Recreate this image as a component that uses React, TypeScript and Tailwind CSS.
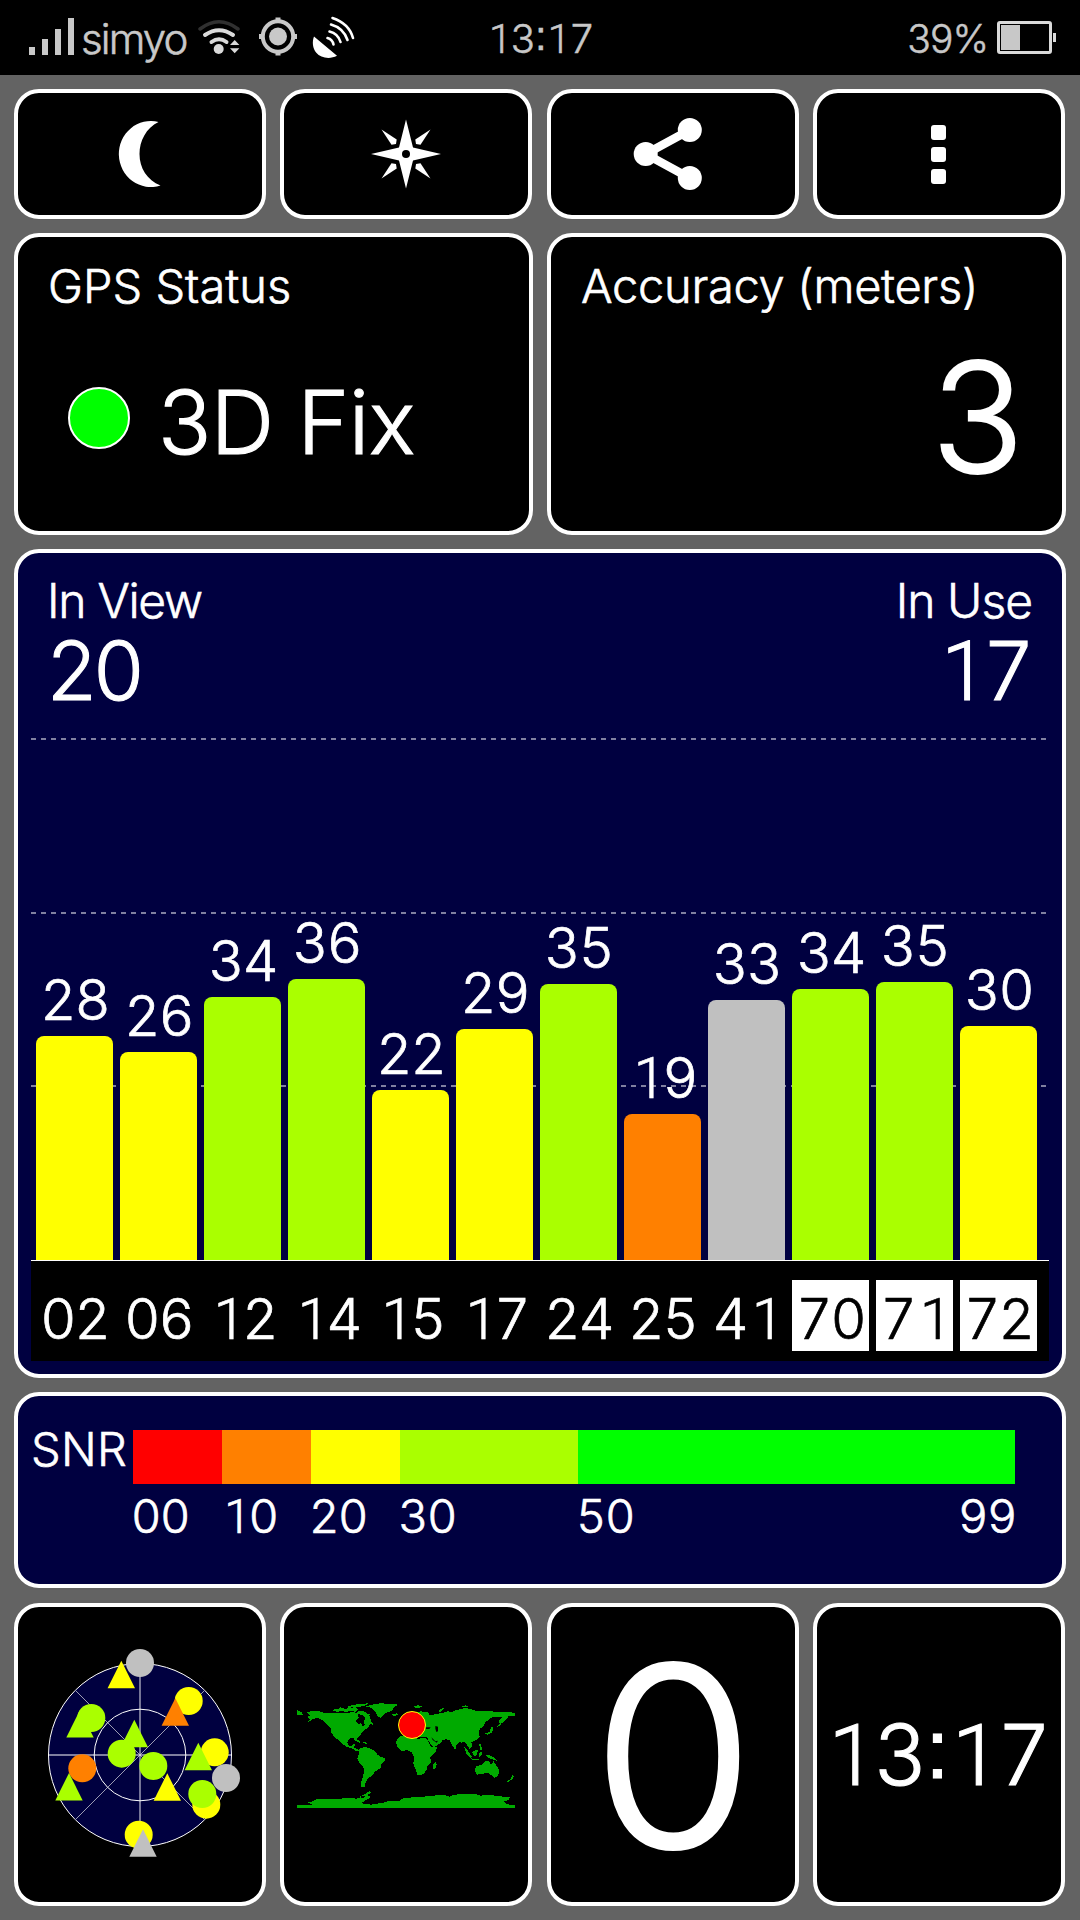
import type { ReactNode } from 'react';
import clsx from 'clsx';

type Satellite = { id: string; snr: number; height: number; color: string; glonass?: boolean };

const YELLOW = 'bg-[#ffff00]';
const LIME = 'bg-[#aaff00]';
const ORANGE = 'bg-[#ff8000]';
const GRAY = 'bg-[#c0c0c0]';

const satellites: Satellite[] = [
  { id: '02', snr: 28, height: 224, color: YELLOW },
  { id: '06', snr: 26, height: 208, color: YELLOW },
  { id: '12', snr: 34, height: 263, color: LIME },
  { id: '14', snr: 36, height: 281, color: LIME },
  { id: '15', snr: 22, height: 170, color: YELLOW },
  { id: '17', snr: 29, height: 231, color: YELLOW },
  { id: '24', snr: 35, height: 276, color: LIME },
  { id: '25', snr: 19, height: 146, color: ORANGE },
  { id: '41', snr: 33, height: 260, color: GRAY },
  { id: '70', snr: 34, height: 271, color: LIME, glonass: true },
  { id: '71', snr: 35, height: 278, color: LIME, glonass: true },
  { id: '72', snr: 30, height: 234, color: YELLOW, glonass: true },
];

// Offsets from the centre of the sky plot
const skyCircles = [
  { x: 0, y: -92, fill: '#c0c0c0' },
  { x: 48.7, y: -54, fill: '#ffff00' },
  { x: -48.7, y: -37, fill: '#aaff00' },
  { x: 74.7, y: -2.7, fill: '#ffff00' },
  { x: 86, y: 23, fill: '#c0c0c0' },
  { x: 66.3, y: 49.7, fill: '#ffff00' },
  { x: 62.3, y: 39, fill: '#aaff00' },
  { x: 13.3, y: 11, fill: '#aaff00' },
  { x: -18.3, y: -1.3, fill: '#aaff00' },
  { x: -57.7, y: 13.3, fill: '#ff8000' },
  { x: -1.3, y: 79.7, fill: '#ffff00' },
];

const skyTriangles = [
  { x: -18.7, y: -94.3, fill: '#ffff00' },
  { x: 35.3, y: -56.7, fill: '#ff8000' },
  { x: -60, y: -45, fill: '#aaff00' },
  { x: -5.7, y: -35.3, fill: '#aaff00' },
  { x: 58.3, y: -12.3, fill: '#aaff00' },
  { x: -71, y: 18, fill: '#aaff00' },
  { x: 27.3, y: 18.3, fill: '#ffff00' },
  { x: 3, y: 74.3, fill: '#c0c0c0' },
];

const land = [
  // North America
  '22,60 36,68 38,74 22,74',
  '50,68 62,64 88,64 100,68 128,68 160,70 190,66 204,70 206,84 196,92 204,102 214,100 218,110 224,106 222,92 228,82 238,78 244,94 252,106 240,102 236,112 224,120 214,128 210,138 200,146 204,158 196,150 190,144 178,146 172,156 174,166 184,168 190,162 196,162 192,172 202,178 212,182 200,184 188,176 170,170 156,162 146,150 134,142 124,128 122,114 112,104 98,90 84,84 72,86 54,96 60,88 52,82 60,76',
  '130,62 134,56 144,58 150,52 160,54 168,58 178,50 186,54 194,50 204,58 198,66 180,62 168,68 156,62 144,66',
  '200,66 210,62 222,64 230,70 242,74 234,78 238,84 226,86 220,76 206,72',
  '172,50 186,46 206,42 236,40 226,46 210,50 190,52',
  '190,148 204,150 214,156 208,158 196,152',
  '218,156 232,158 230,161 218,160',
  // Greenland and Iceland
  '226,50 246,44 264,42 270,40 320,42 322,46 312,52 306,62 290,68 278,76 272,84 264,80 256,66 246,54',
  '304,72 322,70 324,75 310,78',
  // South America
  '208,176 226,170 240,176 256,184 262,194 272,200 284,204 284,212 274,222 272,234 256,244 246,256 236,264 228,274 224,284 226,291 212,290 214,274 220,256 222,238 218,228 208,218 202,206 206,192',
  // Africa
  '334,138 348,136 366,134 370,142 384,146 406,144 414,152 424,172 442,170 436,186 420,202 424,218 412,228 410,240 402,250 394,254 382,255 378,242 370,222 372,202 364,186 350,180 334,184 322,172 318,154 326,142',
  '430,222 438,216 440,222 436,236 428,238',
  // Europe and Asia
  '336,132 330,122 334,114 350,108 360,90 372,72 390,64 412,66 420,76 440,72 460,68 474,64 486,66 492,62 510,58 526,54 545,58 560,64 600,64 640,66 675,68 675,78 656,78 648,90 630,104 626,92 636,82 620,80 600,84 594,92 586,96 582,108 570,116 566,128 569,140 556,152 544,156 548,168 538,176 528,160 522,154 516,158 508,156 498,166 496,180 486,166 480,152 468,148 458,150 452,160 430,172 424,164 414,150 412,142 400,140 388,142 370,132 352,134',
  '372,50 384,46 396,49 388,54 376,53',
  '444,64 452,56 466,54 456,60 450,66',
  '512,48 528,46 538,51 522,52',
  // Japan
  '606,110 610,112 606,128 594,134 580,132 600,126 602,114',
  '640,84 646,86 630,106 622,110 634,98',
  // South-East Asia
  '522,170 530,178 546,200 542,206 530,192',
  '542,205 566,208 564,211 546,210',
  '546,186 562,178 564,184 558,198 550,196',
  '566,160 572,162 578,180 572,182',
  '568,188 578,186 574,198 568,200',
  '586,194 600,196 612,202 622,213 606,208 596,204',
  // Australia and New Zealand
  '558,230 574,224 586,214 598,214 600,222 606,222 610,212 618,226 628,240 624,258 612,264 604,256 592,248 576,252 560,254 554,240',
  '666,256 672,258 668,266 654,277 652,274 662,266',
  // Antarctica
  '21,346 70,346 64,342 52,338 68,334 78,328 120,326 150,327 170,323 200,326 210,322 222,324 226,318 210,320 238,304 244,306 232,316 242,318 236,326 222,334 214,340 244,344 280,338 300,332 330,332 340,324 400,320 440,316 460,314 480,320 490,314 540,312 560,313 570,317 600,314 620,318 660,322 656,330 640,334 648,342 675,346 675,354 21,354',
];

function Card({ className, children }: { className?: string; children: ReactNode }) {
  return <div className={clsx('rounded-[25px] border-4 border-white', className)}>{children}</div>;
}

// Roboto has the narrow 1, the other figures are Inter
function One({ className = 'ml-[0.09em] mr-[-0.02em]' }: { className?: string }) {
  return <span className={clsx("font-['Roboto',sans-serif] text-[1.02em] leading-[0]", className)}>1</span>;
}

function Num({ value }: { value: string | number }) {
  return (
    <span>
      {String(value).split('').map((digit, i) => (digit === '1' ? <One key={i} /> : digit))}
    </span>
  );
}

function Time({ colonClass }: { colonClass: string }) {
  return (
    <>
      <One className="mr-[-0.01em]" />3
      <span className={clsx("font-['Liberation_Sans',sans-serif] leading-[0]", colonClass)}>:</span>
      <One className="ml-[0.06em] mr-[-0.01em]" />7
    </>
  );
}

function StatusBar() {
  return (
    <header className="flex h-[75px] items-start bg-black text-[#c8c8c8]">
      <div className="mt-[18px] ml-[29px] flex h-[37px] items-end gap-[7px]">
        <div className="h-2 w-1.5 bg-[#c8c8c8]" />
        <div className="h-4 w-1.5 bg-[#c8c8c8]" />
        <div className="h-[26px] w-1.5 bg-[#c8c8c8]" />
        <div className="h-[37px] w-1.5 bg-[#c8c8c8]" />
      </div>
      <span className="mt-[18px] ml-[7px] w-[115px] text-[42px] leading-none tracking-[-1.9px]">simyo</span>

      <svg className="mt-4" width="48" height="42" viewBox="196 16 48 42" fill="none" strokeLinecap="round">
        <path d="M200 29Q219 14.500 238 29" stroke="#303030" strokeWidth="3.500" />
        <path d="M205 35Q219 25.500 233 35" stroke="#dadada" strokeWidth="4" />
        <path d="M211.500 42Q219 36.500 226.500 42" stroke="#dadada" strokeWidth="4" />
        <circle cx="218.700" cy="49" r="5" fill="#dadada" />
        <path d="M230 45l4.700-5 4.700 5zM230 48.300h9.400l-4.700 5z" fill="#dadada" />
      </svg>

      <svg className="mt-4 ml-[14px]" width="40" height="42" viewBox="258 16 40 42">
        <circle cx="278" cy="36.500" r="15.200" fill="none" stroke="#c8c8c8" strokeWidth="4" />
        <circle cx="278" cy="36.500" r="9" fill="#c8c8c8" />
        <path d="M275.500 17.500h5v4h-5zM275.500 51.500h5v4h-5zM259 34h4v5h-4zM293 34h4v5h-4z" fill="#c8c8c8" />
      </svg>

      <svg className="mt-[14px] ml-3" width="48" height="46" viewBox="310 14 48 46" fill="none" stroke="#fff" strokeLinecap="round">
        <path d="M314 36.500L337 55.800C329.500 59.700 320.500 57.800 316.300 52.800C312.500 48.300 312 41.500 314 36.500Z" fill="#fff" stroke="none" />
        <path d="M332.500 18Q349 23.500 353 38" strokeWidth="2.600" />
        <path d="M331 24.500Q343.500 28 347.500 40" strokeWidth="2.600" />
        <path d="M329.500 31.500Q338 33.500 340.500 42" strokeWidth="2.600" />
        <path d="M327.500 38Q332.500 39.500 333.500 44.500" strokeWidth="2.600" />
      </svg>

      <span className="mt-[19px] ml-[131px] w-[150px] text-[40px] leading-none tracking-[-1px] tabular-nums"><Time colonClass="align-[3px]" /></span>

      <div className="mt-[19px] mr-6 ml-auto flex items-start">
        <span className="text-[39px] leading-none tracking-[-1px]">39%</span>
        <svg className="mt-px ml-2" width="60" height="36" viewBox="996 20 60 36">
          <rect x="998.500" y="22.500" width="52" height="30" rx="1.500" fill="none" stroke="#dadada" strokeWidth="3" />
          <rect x="1001" y="25" width="19" height="25" fill="#c8c8c8" />
          <rect x="1053" y="33" width="3" height="9" fill="#dadada" />
        </svg>
      </div>
    </header>
  );
}

function Toolbar() {
  return (
    <div className="mr-px flex justify-between">
      <Card className="flex h-[130px] w-[252px] items-center justify-center bg-black">
        <svg width="46" height="68" viewBox="117 120 46 68" fill="#fff">
          <path d="M158.500 122A32 33 0 1 0 160.500 185.500C147 180 139.500 168 139.500 154C139.500 141 146 128 158.500 122Z" />
        </svg>
      </Card>
      <Card className="flex h-[130px] w-[252px] items-center justify-center bg-black">
        <svg width="70" height="70" viewBox="-35 -35 70 70" fill="#fff">
          <path d="M0-34.500L7-6.500L35 0L7 6.500L0 34.500L-7 6.500L-35 0L-7-6.500Z" />
          <circle r="4" fill="#000" />
          <path d="M-24.500-24.500L-9.300-14.500L-10-10L-14.500-9.300Z" />
          <path d="M24.500-24.500L9.300-14.500L10-10L14.500-9.300Z" />
          <path d="M-24.500 24.500L-9.300 14.500L-10 10L-14.500 9.300Z" />
          <path d="M24.500 24.500L9.300 14.500L10 10L14.500 9.300Z" />
        </svg>
      </Card>
      <Card className="flex h-[130px] w-[252px] items-center justify-center bg-black">
        <svg width="80" height="76" viewBox="633 116 80 76" fill="#fff">
          <path d="M689.800 130L645.700 154L689.800 178" fill="none" stroke="#fff" strokeWidth="8.500" />
          <circle cx="645.700" cy="154" r="12" />
          <circle cx="689.800" cy="130" r="12" />
          <circle cx="689.800" cy="178" r="12" />
        </svg>
      </Card>
      <Card className="flex h-[130px] w-[252px] flex-col items-center justify-center gap-[7px] bg-black">
        <div className="size-[15px] rounded-[3px] bg-white" />
        <div className="size-[15px] rounded-[3px] bg-white" />
        <div className="size-[15px] rounded-[3px] bg-white" />
      </Card>
    </div>
  );
}

function SignalChart() {
  return (
    <Card className="flex h-[829px] flex-col bg-[#000040]">
      <div className="flex h-[185px] justify-between pt-6 pr-[27px] pl-[29px]">
        <div>
          <div className="text-[48px] leading-none tracking-[-1.3px]">In View</div>
          <div className="mt-1.5 text-[81px] leading-none tracking-[-3px]">20</div>
        </div>
        <div className="flex flex-col items-end">
          <div className="mr-[3px] text-[48px] leading-none tracking-[-1px]">In Use</div>
          <div className="mt-1.5 mr-[3px] text-[81px] leading-none tracking-[-3px] tabular-nums"><Num value={17} /></div>
        </div>
      </div>

      <div className="relative mx-[13px] h-[523px] border-b border-white">
        <div className="absolute top-0 right-[3px] left-0 h-0.5 bg-[repeating-linear-gradient(90deg,#8080a0_0_5px,transparent_5px_10px)]" />
        <div className="absolute top-[174px] right-[3px] left-0 h-0.5 bg-[repeating-linear-gradient(90deg,#8080a0_0_5px,transparent_5px_10px)]" />
        <div className="absolute top-[347px] right-[3px] left-0 h-0.5 bg-[repeating-linear-gradient(90deg,#8080a0_0_5px,transparent_5px_10px)]" />
        <div className="relative flex h-full items-end gap-[7px] pl-[5px]">
          {satellites.map((sat) => (
            <div key={sat.id} className="flex w-[77px] flex-col items-center">
              <span className="mb-2 text-[56px] leading-none tracking-[-2px] tabular-nums"><Num value={sat.snr} /></span>
              <div className={clsx('w-full rounded-t-[8px]', sat.color)} style={{ height: sat.height }} />
            </div>
          ))}
        </div>
      </div>

      <div className="mx-[13px] flex h-[100px] gap-[7px] bg-black pt-[19px] pl-[5px]">
        {satellites.map((sat) => (
          <div
            key={sat.id}
            className={clsx(
              'flex h-[71px] w-[77px] justify-center pt-[11px] text-[56px] leading-none tracking-[-2px] tabular-nums',
              sat.glonass && 'bg-white text-black'
            )}
          >
            <Num value={sat.id} />
          </div>
        ))}
      </div>
    </Card>
  );
}

function SnrLegend() {
  return (
    <Card className="flex h-[196px] bg-[#000040] pl-[13px]">
      <span className="w-[102px] pt-[29px] text-[47px] leading-none tracking-[0.3px]">SNR</span>
      <div className="pt-[34px]">
        <div className="flex h-[54px]">
          <div className="w-[89px] bg-[#ff0000]" />
          <div className="w-[89px] bg-[#ff8000]" />
          <div className="w-[89px] bg-[#ffff00]" />
          <div className="w-[178px] bg-[#aaff00]" />
          <div className="w-[437px] bg-[#00ff00]" />
        </div>
        <div className="mt-2 -ml-0.5 flex text-[47px] leading-none tracking-[-1.5px] tabular-nums">
          <span className="w-[89px]">00</span>
          <span className="w-[89px]"><Num value={10} /></span>
          <span className="w-[89px]">20</span>
          <span className="w-[178px]">30</span>
          <span className="w-[382px]">50</span>
          <span>99</span>
        </div>
      </div>
    </Card>
  );
}

function SkyPlot() {
  return (
    <svg width="220" height="220" viewBox="-110 -110 220 220">
      <circle r="91.500" fill="#000040" stroke="#fff" />
      <path d="M-64.500-64.500L64.500 64.500M-64.500 64.500L64.500-64.500" stroke="#9c9cb4" />
      <path d="M0-91V91" stroke="#9c9cb4" strokeWidth="1.500" />
      <path d="M-91 0H91" stroke="#fff" />
      <circle r="45.800" fill="none" stroke="#fff" />
      {skyCircles.map((c, i) => (
        <circle key={i} cx={c.x} cy={c.y} r="14" fill={c.fill} />
      ))}
      {skyTriangles.map((t, i) => (
        <path key={i} d={`M${t.x} ${t.y}l13.700 27.500h-27.400z`} fill={t.fill} />
      ))}
    </svg>
  );
}

function WorldMap() {
  return (
    <svg width="218" height="106" viewBox="21 36 654 318">
      <g fill="#00aa00" shapeRendering="crispEdges">
        {land.map((points, i) => (
          <polygon key={i} points={points} />
        ))}
      </g>
      {/* inland seas */}
      <path d="M436 108l8 2 0 14-5 2-3-10zM408 112h14l-4 5h-10zM424 142l12 12 8-2-4 6-12-8z" fill="#000" />
      <circle cx="366" cy="105" r="40.500" fill="#ff0000" stroke="#ffff00" strokeWidth="3" />
    </svg>
  );
}

export default function App() {
  return (
    <div className="h-[1920px] w-[1080px] overflow-hidden bg-[#636363] font-['Inter','Liberation_Sans',sans-serif] font-light text-white **:[-webkit-text-stroke-width:0.013em]">
      <StatusBar />
      <main className="flex flex-col gap-[14px] pt-[14px] pr-[14px] pl-[14px]">
        <Toolbar />

        <div className="flex justify-between">
          <Card className="h-[302px] w-[519px] bg-black pt-[25px] pl-[30px]">
            <div className="text-[47px] leading-none">GPS Status</div>
            <div className="mt-[69px] flex pl-5">
              <div className="mt-[9px] size-[62px] rounded-full border-2 border-white bg-[#00ff00]" />
              <div className="ml-7 text-[88px] leading-none tracking-[-0.6px]">3D Fix</div>
            </div>
          </Card>
          <Card className="h-[302px] w-[519px] bg-black pt-[25px] pl-[30px]">
            <div className="text-[47px] leading-none tracking-[-0.3px]">Accuracy (meters)</div>
            <div className="mt-8 mr-[38px] text-right text-[153px] leading-none">3</div>
          </Card>
        </div>

        <SignalChart />
        <SnrLegend />

        <div className="mt-px mr-px flex justify-between">
          <Card className="flex h-[303px] w-[252px] items-center justify-center bg-black">
            <SkyPlot />
          </Card>
          <Card className="flex h-[303px] w-[252px] items-center justify-center bg-black">
            <WorldMap />
          </Card>
          <Card className="flex h-[303px] w-[252px] items-center justify-center bg-black pt-[3px] pl-0.5 text-[250px] leading-none">
            <span className="scale-x-105">0</span>
          </Card>
          <Card className="flex h-[303px] w-[252px] items-center justify-center bg-black text-[84px] leading-none tracking-[-2px] whitespace-nowrap tabular-nums">
            <span><Time colonClass="align-[7px]" /></span>
          </Card>
        </div>
      </main>
    </div>
  );
}
